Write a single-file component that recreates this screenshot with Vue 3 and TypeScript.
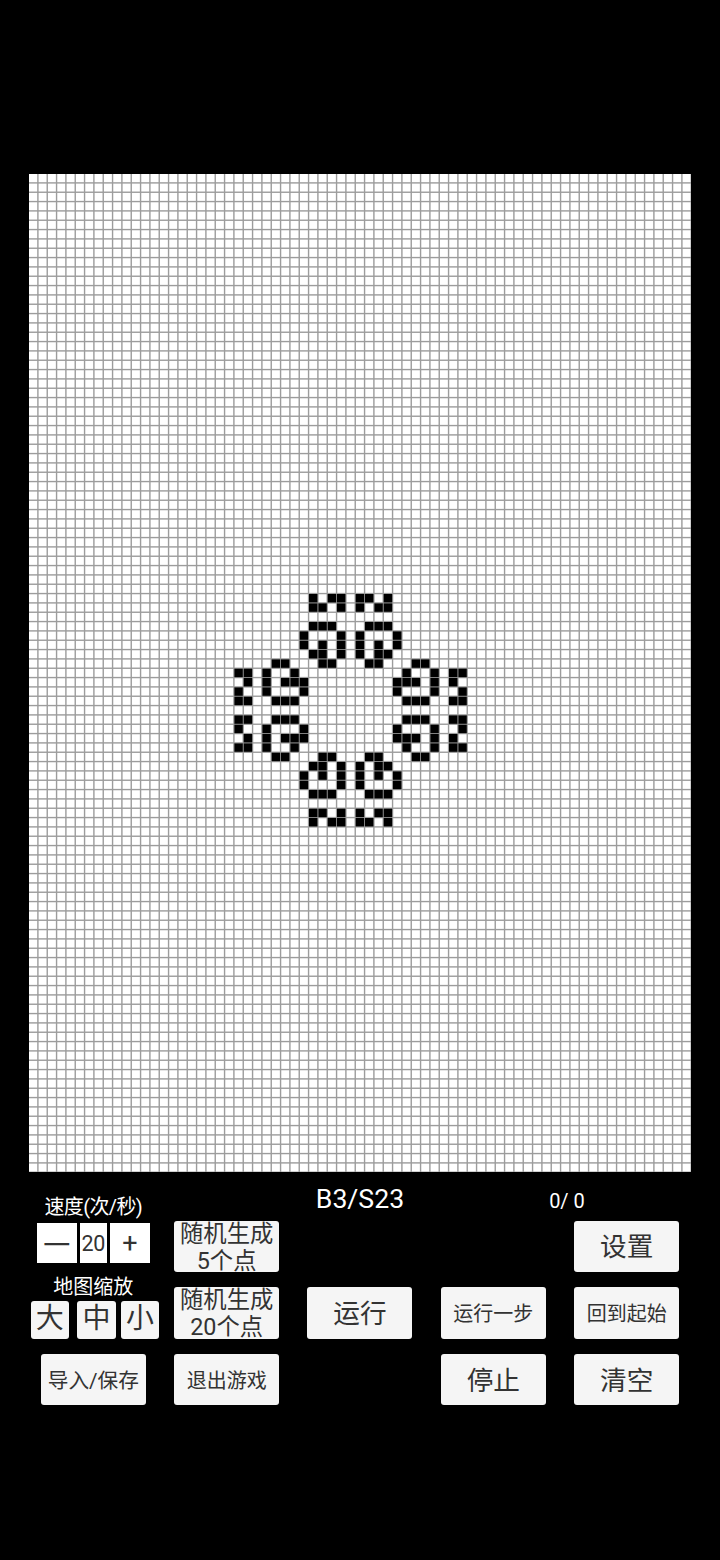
<script setup lang="ts">
const PITCH = 28 / 3
const COLS = 71
const ROWS = 107
const WIDTH = 662
const HEIGHT = 998
const CELL = 8.5

const topLeft: Record<number, number[]> = {
  45: [30, 32, 33],
  46: [30, 31, 33],
  48: [30, 31, 32],
  49: [29, 33],
  50: [29, 31, 33],
  51: [30, 31, 33],
  52: [26, 27, 31, 32],
  53: [22, 23, 25, 28],
  54: [23, 25, 27, 28, 29],
  55: [22, 25, 29],
  56: [22, 23, 26, 27, 28],
}

const live: { x: number; y: number }[] = []
for (const [rowKey, cols] of Object.entries(topLeft)) {
  const r = Number(rowKey)
  for (const c of cols) {
    for (const col of [c, 68 - c]) {
      for (const row of [r, 114 - r]) {
        live.push({ x: col * PITCH, y: row * PITCH })
      }
    }
  }
}

const vLines = Array.from({ length: COLS }, (_, i) => i * PITCH + 8.2)
const hLines = Array.from({ length: ROWS }, (_, i) => i * PITCH + 8.2)
</script>

<template>
  <main class="page">
    <svg class="board" :width="WIDTH" :height="HEIGHT" :viewBox="`0 0 ${WIDTH} ${HEIGHT}`">
      <rect :width="WIDTH" :height="HEIGHT" fill="#fff" />
      <rect v-for="x in vLines" :key="'v' + x" :x="x" y="0" width="1.4" :height="HEIGHT" fill="#9c9c9c" />
      <rect v-for="y in hLines" :key="'h' + y" x="0" :y="y" :width="WIDTH" height="1.4" fill="#9c9c9c" />
      <rect v-for="(c, i) in live" :key="i" :x="c.x" :y="c.y" :width="CELL" :height="CELL" fill="#000" />
    </svg>

    <section class="controls">
      <div class="left-panel">
        <div class="label label-speed">速度(次/秒)</div>
        <div class="stepper">
          <button class="step step-sign">一</button>
          <div class="step step-value">20</div>
          <button class="step step-sign">+</button>
        </div>
        <div class="label label-zoom">地图缩放</div>
        <div class="zooms">
          <button class="btn zoom">大</button>
          <button class="btn zoom zoom-mid">中</button>
          <button class="btn zoom">小</button>
        </div>
      </div>

      <div class="rule">B3/S23</div>
      <div class="counter">0/ 0</div>

      <button class="btn cell-btn c2 r2 text-mid">随机生成<br />5个点</button>
      <button class="btn cell-btn c5 r2 text-big">设置</button>

      <button class="btn cell-btn c2 r3 text-mid">随机生成<br />20个点</button>
      <button class="btn cell-btn c3 r3 text-big">运行</button>
      <button class="btn cell-btn c4 r3 text-small">运行一步</button>
      <button class="btn cell-btn c5 r3 text-small">回到起始</button>

      <button class="btn cell-btn c1 r4 text-import">导入/保存</button>
      <button class="btn cell-btn c2 r4 text-small">退出游戏</button>
      <button class="btn cell-btn c4 r4 text-big">停止</button>
      <button class="btn cell-btn c5 r4 text-big">清空</button>
    </section>
  </main>
</template>

<style scoped>
.page {
  width: 720px;
  height: 1560px;
  box-sizing: border-box;
  padding-top: 174px;
  background: #000;
  font-family: Roboto, "Noto Sans CJK SC", sans-serif;
  overflow: hidden;
}

.board {
  display: block;
  margin-left: 29px;
}

.controls {
  display: grid;
  width: 666.67px;
  margin-left: 26.67px;
  grid-template-columns: repeat(5, 1fr);
  grid-template-rows: 41px repeat(3, 66.67px);
}

.left-panel {
  grid-column: 1;
  grid-row: 1 / 4;
  display: flex;
  flex-direction: column;
  align-items: center;
  padding-top: 22px;
}

.label {
  height: 26px;
  line-height: 26px;
  font-size: 20px;
  color: #fff;
  white-space: nowrap;
}

.label-speed {
  letter-spacing: -0.6px;
}

.label-zoom {
  margin-top: 10.7px;
}

.stepper {
  display: flex;
  gap: 3.33px;
  margin-top: 3.3px;
}

.step {
  display: flex;
  align-items: center;
  justify-content: center;
  height: 40px;
  padding: 0;
  border: 0;
  background: #fff;
  color: #333;
  font-family: inherit;
}

.step-sign {
  width: 40px;
  font-size: 27px;
}

.step-value {
  width: 26.67px;
  font-size: 21.5px;
  letter-spacing: -0.3px;
}

.zooms {
  display: flex;
  margin-top: 0.7px;
  margin-left: 3.3px;
  gap: 5.3px;
}

.btn {
  padding: 0;
  border: 0;
  border-radius: 3px;
  background: #f5f5f5;
  color: #333;
  font-family: inherit;
}

.zoom {
  width: 38.33px;
  height: 38.33px;
  font-size: 28px;
  line-height: 1;
  padding-bottom: 1px;
}

.zoom-mid {
  margin-left: 3px;
}

.cell-btn {
  width: 105px;
  height: 51.5px;
  justify-self: center;
  align-self: center;
  white-space: nowrap;
}

.text-big { font-size: 26.67px; padding-bottom: 3px; }
.text-mid { font-size: 23.33px; line-height: 27px; }
.text-small { font-size: 20px; }
.text-import { font-size: 20.67px; padding-bottom: 1px; }

.c1 { grid-column: 1; }
.c2 { grid-column: 2; }
.c3 { grid-column: 3; }
.c4 { grid-column: 4; }
.c5 { grid-column: 5; }
.r2 { grid-row: 2; }
.r3 { grid-row: 3; }
.r4 { grid-row: 4; }

.rule {
  grid-column: 3;
  grid-row: 1;
  justify-self: center;
  padding-top: 12px;
  line-height: 31px;
  font-size: 26.67px;
  color: #fff;
}

.counter {
  grid-column: 4 / 6;
  grid-row: 1;
  justify-self: center;
  padding: 17px 0 0 14px;
  line-height: 24px;
  font-size: 20px;
  color: #fff;
  white-space: pre;
}
</style>

<style>
html, body {
  margin: 0;
  background: #000;
}
</style>
